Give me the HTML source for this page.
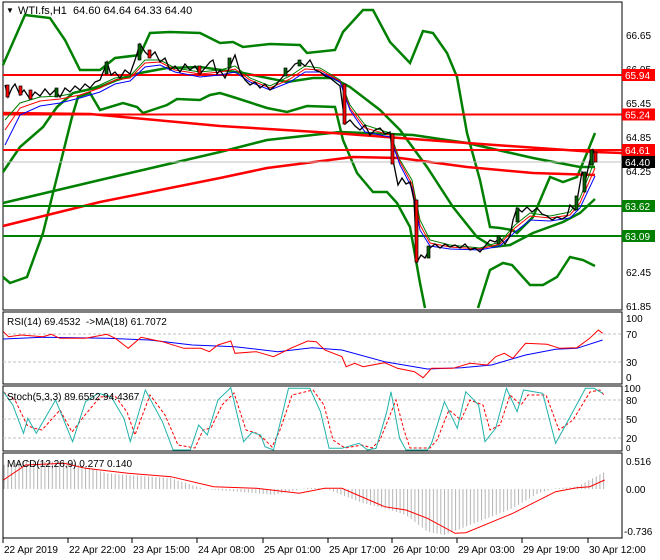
<!DOCTYPE html>
<html><head><meta charset="utf-8"><style>
html,body{margin:0;padding:0;background:#fff;}
svg{display:block;font-family:"Liberation Sans",sans-serif;}
</style></head><body>
<svg width="660" height="560" xmlns="http://www.w3.org/2000/svg">
<defs>
<pattern id="hb" width="3.7" height="10" patternUnits="userSpaceOnUse"><rect x="0" y="0" width="1" height="10" fill="#b4b4b4"/></pattern>
</defs>
<rect x="3" y="2" width="619" height="308" fill="none" stroke="#000"/>
<rect x="3" y="312" width="619" height="72" fill="none" stroke="#000"/>
<rect x="3" y="386" width="619" height="65" fill="none" stroke="#000"/>
<rect x="3" y="453" width="619" height="85" fill="none" stroke="#000"/>

<g fill="none" stroke-width="2.5">
<polyline stroke="#008000" points="3,65 25,15 50,18 65,40 80,70 100,70 115,58 140,55 150,33 170,32 200,33 220,43 233,42 243,47 270,44 300,45 307,53 335,50 343,32 363,10 373,10 390,42 410,63 423,31 433,33 447,53 457,77 467,133 480,180 490,227 500,228 512,230 517,233 533,217 550,177 563,182 577,177 587,153 595,133"/>
<polyline stroke="#008000" points="3,277 10,283 27,277 43,233 63,153 72,117 78,97 90,93 100,110 123,103 137,107 143,113 167,105 177,99 200,100 210,95 220,93 233,97 267,108 287,112 307,106 335,107 343,140 357,173 373,192 387,192 397,203 410,227 420,283 425,308"/>
<polyline stroke="#008000" points="478,308 490,270 503,263 512,265 530,285 543,285 557,277 570,257 583,260 595,266"/>
<polyline stroke="#008000" points="3,172 20,147 43,127 57,107 73,93 100,87 117,80 140,73 167,68 200,67 243,73 287,82 313,78 333,78 350,87 380,110 400,130 427,167 453,207 477,237 493,247 510,245 533,233 563,222 580,213 595,199"/>
<polyline stroke="#008000" points="3,203 100,180 220,152 267,140 340,132 413,135 467,143 533,158 580,167 595,167"/>
<polyline stroke="#ff0000" points="3,226 100,202 220,178 267,168 353,157 400,158 467,167 533,173 595,175"/>
<polyline stroke="#ff0000" points="3,113 90,114 220,126 333,133 467,143 595,152 622,153"/>
</g>
<line x1="3" y1="75" x2="622" y2="75" stroke="#ff0000" stroke-width="2"/>
<line x1="3" y1="114.5" x2="622" y2="114.5" stroke="#ff0000" stroke-width="2"/>
<line x1="3" y1="150" x2="622" y2="150" stroke="#ff0000" stroke-width="2"/>
<line x1="3" y1="162" x2="622" y2="162" stroke="#c0c0c0" stroke-width="1"/>
<line x1="3" y1="206" x2="622" y2="206" stroke="#008000" stroke-width="2"/>
<line x1="3" y1="236" x2="622" y2="236" stroke="#008000" stroke-width="2"/>

<g fill="none" stroke-width="1">
<polyline stroke="#008000" points="5,120 20,103 40,97 60,96 80,92 100,85 115,78 130,76 145,60 160,60 175,68 200,72 220,70 235,66 250,78 270,86 290,76 305,66 320,68 340,80 350,105 365,125 390,133 400,160 412,180 420,220 430,240 450,245 480,248 500,242 515,225 530,213 550,216 570,212 580,198 595,160"/>
<polyline stroke="#ff0000" points="5,130 20,108 40,101 60,99 80,95 100,88 115,80 130,78 145,63 160,62 175,70 200,74 220,72 235,69 250,80 270,88 290,79 305,69 320,70 340,81 350,108 365,128 390,135 400,162 412,184 420,225 430,243 450,247 480,249 500,244 515,228 530,216 550,218 570,215 580,203 595,168"/>
<polyline stroke="#0000ff" points="5,145 20,115 40,106 60,103 80,98 100,92 115,84 130,81 145,67 160,65 175,72 200,77 220,75 235,72 250,82 270,90 290,82 305,72 320,72 340,82 350,110 365,132 390,137 400,165 412,188 420,230 430,246 450,249 480,250 500,246 515,232 530,220 550,221 570,218 580,208 595,176"/>
</g>
<polyline fill="none" stroke="#000" stroke-width="1.3" points="5,85 8,97 12,88 15,84 20,95 24,90 30,99 35,92 40,96 45,89 50,95 55,90 60,97 65,88 70,92 75,86 80,90 85,84 90,88 95,82 100,80 104,70 107,62 111,75 115,72 120,78 125,70 130,74 135,60 140,44 145,52 150,57 155,52 160,62 165,58 170,70 175,66 180,72 185,64 190,70 195,66 200,74 205,68 210,62 213,60 217,74 220,70 225,78 230,66 235,55 240,72 245,80 250,85 255,82 260,88 265,84 270,90 275,86 280,80 285,74 290,70 295,64 300,62 305,66 310,60 315,70 320,72 325,76 330,78 335,82 340,86 345,124 350,120 355,126 360,130 365,125 370,135 375,130 380,128 385,134 390,132 393,160 398,185 402,178 406,184 410,182 414,200 417,262 421,255 425,258 430,248 435,244 440,248 445,244 450,247 455,245 460,248 465,244 470,250 475,248 480,252 485,246 490,240 495,242 500,238 505,244 510,236 513,220 517,208 522,212 527,207 532,212 537,208 542,214 547,216 552,220 557,217 562,219 567,216 570,205 575,210 578,195 582,172 586,178 590,160 593,150 596,158"/>
<g stroke="#000" stroke-width="0.7">
<rect x="6" y="85" width="3" height="12" fill="#ff0000"/>
<rect x="19" y="86" width="3" height="9" fill="#ff0000"/>
<rect x="29" y="90" width="3" height="9" fill="#ff0000"/>
<rect x="55" y="88" width="3" height="9" fill="#006400"/>
<rect x="105" y="62" width="3" height="12" fill="#006400"/>
<rect x="138" y="44" width="3" height="16" fill="#006400"/>
<rect x="148" y="50" width="3" height="8" fill="#ff0000"/>
<rect x="198" y="66" width="3" height="8" fill="#ff0000"/>
<rect x="228" y="58" width="3" height="10" fill="#006400"/>
<rect x="284" y="68" width="3" height="8" fill="#006400"/>
<rect x="298" y="60" width="3" height="6" fill="#006400"/>
<rect x="343" y="84" width="3" height="40" fill="#ff0000"/>
<rect x="391" y="134" width="3" height="30" fill="#ff0000"/>
<rect x="415" y="200" width="3" height="62" fill="#ff0000"/>
<rect x="427" y="246" width="3" height="12" fill="#006400"/>
<rect x="497" y="236" width="3" height="8" fill="#006400"/>
<rect x="516" y="208" width="3" height="14" fill="#006400"/>
<rect x="575" y="196" width="3" height="14" fill="#006400"/>
<rect x="583" y="172" width="3" height="20" fill="#006400"/>
<rect x="590" y="150" width="3" height="15" fill="#006400"/>
<rect x="594" y="152" width="3" height="10" fill="#ff0000"/>
</g>

<text x="6" y="13" font-size="8" fill="#000">▼</text>
<text x="18" y="14" font-size="11" fill="#000">WTI.fs,H1&#160;&#160;64.60 64.64 64.33 64.40</text>

<g font-size="10" fill="#000" stroke="none">
<text x="626" y="39">66.65</text>
<text x="626" y="73">66.05</text>
<text x="626" y="107">65.45</text>
<text x="626" y="141">64.85</text>
<text x="626" y="175">64.25</text>
<text x="626" y="208">63.65</text>
<text x="626" y="242">63.05</text>
<text x="626" y="276">62.45</text>
<text x="626" y="310">61.85</text>
</g>
<rect x="622" y="69" width="33" height="12" fill="#ff0000"/><text x="625" y="79" font-size="10" fill="#fff">65.94</text>
<rect x="622" y="108.5" width="33" height="12" fill="#ff0000"/><text x="625" y="118.5" font-size="10" fill="#fff">65.24</text>
<rect x="622" y="144" width="33" height="12" fill="#ff0000"/><text x="625" y="154" font-size="10" fill="#fff">64.61</text>
<rect x="622" y="156" width="33" height="12" fill="#000"/><text x="625" y="166" font-size="10" fill="#fff">64.40</text>
<rect x="622" y="200" width="33" height="12" fill="#008000"/><text x="625" y="210" font-size="10" fill="#fff">63.62</text>
<rect x="622" y="230" width="33" height="12" fill="#008000"/><text x="625" y="240" font-size="10" fill="#fff">63.09</text>

<line x1="3" y1="334" x2="622" y2="334" stroke="#c0c0c0" stroke-dasharray="3,2"/>
<line x1="3" y1="362" x2="622" y2="362" stroke="#c0c0c0" stroke-dasharray="3,2"/>
<polyline fill="none" stroke="#0000ff" points="3.4,339 42.7,337.3 106.8,338.3 149.6,340 192.3,345 235,346.7 277.8,351.7 312,347.7 341.9,350 384.6,361.7 427.4,369 461.5,367.7 491.5,365 525.6,355 555.6,349.3 576.9,348.3 602.6,340"/>
<polyline fill="none" stroke="#ff0000" points="3.4,331.7 8.5,336.7 21.4,335 42.7,336.7 51.3,334.3 59.8,338.3 85.5,338.3 106.8,334.3 115.4,338.3 128.2,348.3 141,337.3 162.4,341.7 183.8,348.3 200.9,348.3 209.4,351.7 217.9,345 230.8,341 235,353.3 256.4,351.7 273.5,356.7 290.6,348.3 307.7,341 316.2,341.7 324.8,350 341.9,356.7 346.2,366.7 354.7,363.3 363.2,366.7 384.6,362.7 397.4,368.3 414.5,371.7 423.1,377.7 431.6,368.3 453,368.3 470.1,363.3 487.2,365 495.7,356.7 504.3,353.3 512.8,358.3 525.6,343.3 547,344.3 559.8,348.3 576.9,347.7 589.7,338.3 598.3,330 602.6,333.3"/>
<text x="7" y="325" font-size="10" fill="#000">RSI(14) 69.4532 &#160;-&gt;MA(18) 61.7072</text>
<g font-size="10" fill="#000"><text x="626" y="322">100</text><text x="626" y="338">70</text><text x="626" y="366">30</text><text x="626" y="381">0</text></g>

<line x1="3" y1="400" x2="622" y2="400" stroke="#c0c0c0" stroke-dasharray="3,2"/>
<line x1="3" y1="419" x2="622" y2="419" stroke="#c0c0c0" stroke-dasharray="3,2"/>
<line x1="3" y1="438" x2="622" y2="438" stroke="#c0c0c0" stroke-dasharray="3,2"/>
<polyline fill="none" stroke="#ff0000" stroke-dasharray="3,2" points="3.4,392 15,400 27,425 33,428 42,430 60,410 72,432 85,415 100,397 115,396 127,412 135,435 150,395 165,415 178,445 195,448 203,430 211,428 222,405 234,393 246,430 256,433 265,440 272,447 280,430 292,395 313,390 324,405 333,440 345,448 362,445 372,448 380,440 390,415 396,400 404,430 410,448 430,448 437,440 449,410 461,420 470,400 483,405 490,430 500,425 510,395 521,405 528,395 546,395 559,430 573,420 590,392 600,390 604,395"/>
<polyline fill="none" stroke="#20b2aa" points="3.4,391.7 12.8,405 23.5,433.3 27.8,418.3 36.3,433.3 55.6,400 72.6,441.7 85.5,401.7 98.3,393.3 111.1,396.7 123.9,418.3 130.3,441.7 145.3,390 162.4,421.7 173.1,450 190.2,450 198.7,425 207.3,435 217.9,400 230.8,387.7 243.6,441.7 252.1,432.3 260.7,435 265,446.7 273.5,450 282.1,415 288.5,388.3 309.8,388.3 320.5,411.7 329.1,448.3 341.9,448.3 359,443.3 367.5,450 376.1,448.3 386.8,411.7 391,391.7 399.6,438.3 406,450 427.4,450 431.6,443.3 444.4,401.7 457.3,428.3 465.8,391.7 478.6,405 485,441.7 495.7,428.3 506.4,388.3 517.1,411.7 523.5,390 542.7,393.3 555.6,443.3 568.4,420 585.5,388.3 594,388.3 602.6,393.3"/>
<text x="7" y="400" font-size="10" fill="#000">Stoch(5,3,3) 89.6552 94.4367</text>
<g font-size="10" fill="#000"><text x="624" y="392">100</text><text x="626" y="404">80</text><text x="626" y="423">50</text><text x="626" y="442">20</text><text x="626" y="451" font-size="8">0</text></g>

<polygon fill="url(#hb)" points="3.4,489 3.4,465 25.6,461 68.4,461.7 106.8,473.3 170.9,478.3 205.1,489.3 239.3,491.7 273.5,495 307.7,487.7 324.8,488.3 341.9,495 363.2,503.3 384.6,508.3 406,515 427.4,531.7 444.4,535 470.1,525 512.8,508.3 538.5,493.3 555.6,488.3 576.9,486.7 604.7,471.7 604.7,489"/>
<polyline fill="none" stroke="#ff0000" points="3.4,480 25.6,465 64.1,463.3 85.5,468.3 128.2,473.3 170.9,476.7 213.7,486.7 256.4,488.3 299.1,493.3 324.8,488.3 341.9,488.3 384.6,506.7 406,510 427.4,518.3 455.1,533.3 465.8,532.7 512.8,513.3 555.6,491.7 576.9,487.7 589.7,486.7 604.7,480"/>
<text x="7" y="467" font-size="10" fill="#000">MACD(12,26,9) 0.277 0.140</text>
<g font-size="10" fill="#000"><text x="626" y="465">0.516</text><text x="626" y="493">0.00</text><text x="624" y="535">-0.736</text></g>

<g stroke="#000"><line x1="3" y1="538" x2="3" y2="543"/><line x1="68" y1="538" x2="68" y2="543"/><line x1="132" y1="538" x2="132" y2="543"/><line x1="197" y1="538" x2="197" y2="543"/><line x1="263" y1="538" x2="263" y2="543"/><line x1="328" y1="538" x2="328" y2="543"/><line x1="392" y1="538" x2="392" y2="543"/><line x1="457" y1="538" x2="457" y2="543"/><line x1="522" y1="538" x2="522" y2="543"/><line x1="588" y1="538" x2="588" y2="543"/></g>
<g font-size="10" fill="#000">
<text x="4" y="553">22 Apr 2019</text><text x="69" y="553">22 Apr 22:00</text><text x="133" y="553">23 Apr 15:00</text><text x="198" y="553">24 Apr 08:00</text><text x="264" y="553">25 Apr 01:00</text><text x="329" y="553">25 Apr 17:00</text><text x="393" y="553">26 Apr 10:00</text><text x="458" y="553">29 Apr 03:00</text><text x="523" y="553">29 Apr 19:00</text><text x="589" y="553">30 Apr 12:00</text>
</g>
</svg>
</body></html>
